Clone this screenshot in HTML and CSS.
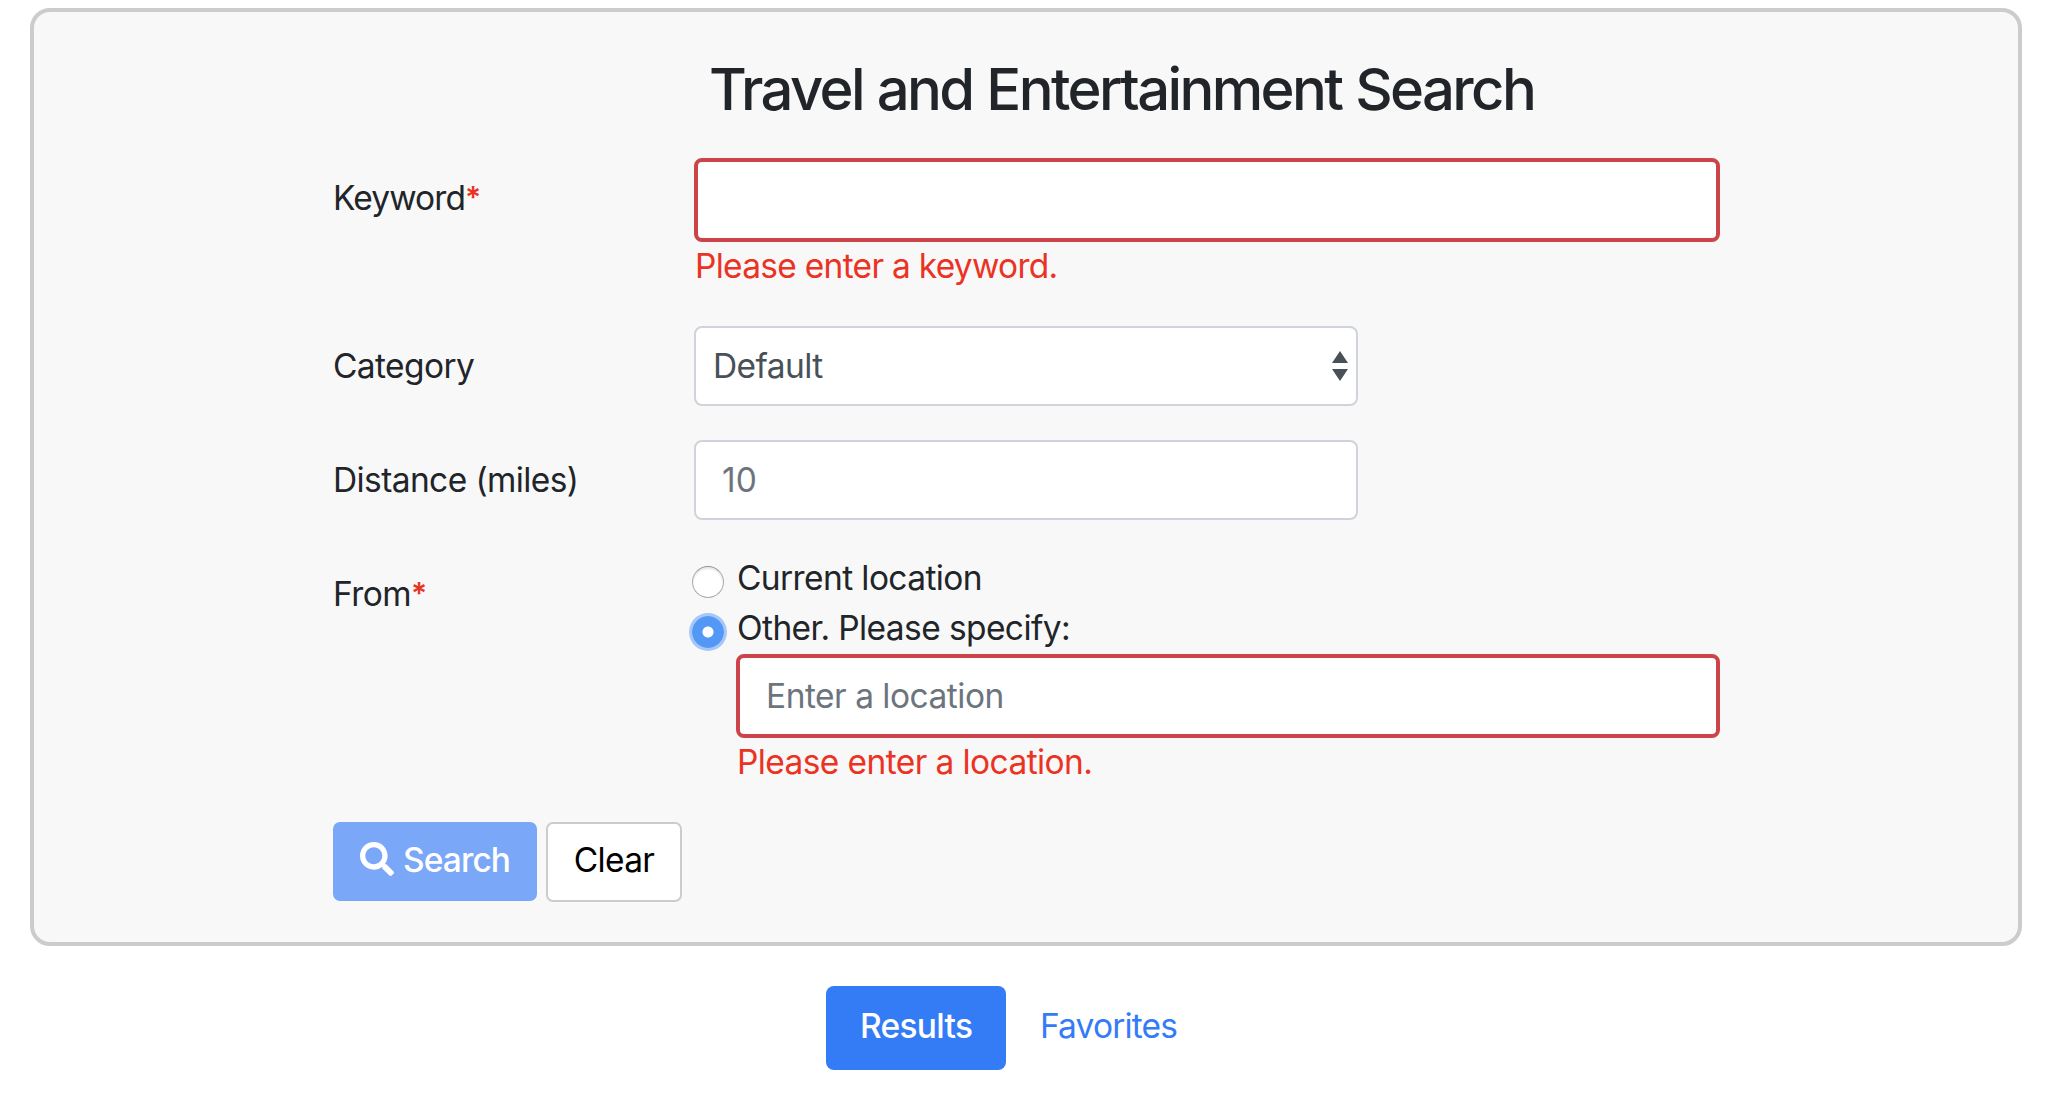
FILE: index.html
```html
<!DOCTYPE html>
<html lang="en">
<head>
<meta charset="utf-8">
<title>Travel and Entertainment Search</title>
<link rel="stylesheet" href="styles.css">
</head>
<body>
<main class="panel">
  <h1 class="title">Travel and Entertainment Search</h1>
  <form class="form">
    <div class="row row-keyword">
      <label class="label">Keyword<span class="star">*</span></label>
      <div class="field">
        <div class="control invalid"></div>
        <div class="error">Please enter a keyword.</div>
      </div>
    </div>
    <div class="row">
      <label class="label">Category</label>
      <div class="control select"><span>Default</span>
        <svg class="arrows" viewBox="0 0 16 30"><path d="M8 0l8 12H0zM8 30l8-12H0z"/></svg>
      </div>
    </div>
    <div class="row">
      <label class="label">Distance (miles)</label>
      <div class="control short">10</div>
    </div>
    <div class="row row-from">
      <label class="label">From<span class="star">*</span></label>
      <div class="field">
        <div class="option"><span class="radio"></span><span>Current location</span></div>
        <div class="option"><span class="radio checked"></span><span>Other. Please specify:</span></div>
        <div class="specify">
          <div class="control invalid">Enter a location</div>
          <div class="error">Please enter a location.</div>
        </div>
      </div>
    </div>
    <div class="actions">
      <div class="btn btn-search"><svg class="icon" viewBox="0 0 512 512"><path d="M505 442.7L405.3 343c-4.500-4.500-10.600-7-17-7H372c27.600-35.300 44-79.700 44-128C416 93.100 322.900 0 208 0S0 93.100 0 208s93.100 208 208 208c48.300 0 92.700-16.400 128-44v16.300c0 6.400 2.500 12.500 7 17l99.700 99.700c9.400 9.400 24.600 9.400 33.900 0l28.300-28.300c9.400-9.400 9.400-24.600.1-34zM208 336c-70.700 0-128-57.200-128-128 0-70.700 57.200-128 128-128 70.700 0 128 57.200 128 128 0 70.700-57.200 128-128 128z"/></svg><span>Search</span></div>
      <div class="btn btn-clear">Clear</div>
    </div>
  </form>
</main>
<nav class="tabs">
  <a class="tab active">Results</a>
  <a class="tab">Favorites</a>
</nav>
</body>
</html>
```
FILE: styles.css
```css
* { box-sizing: border-box; }
body {
  margin: 0;
  padding-top: 8px;
  height: 1098px;
  overflow: hidden;
  background: #fff;
  color: #212529;
  font: 430 33.5px/48px Inter, "Liberation Sans", sans-serif;
  letter-spacing: -0.6px;
}
.panel {
  height: 938px;
  margin: 0 36px 0 30px;
  padding: 41px 298px 0 299px;
  border: 4px solid #ccc;
  border-radius: 20px;
  background: #f8f8f8;
}
.title {
  margin: 0 0 33px;
  padding-left: 376px;
  font-size: 58px;
  font-weight: 540;
  line-height: 72px;
  letter-spacing: -2.63px;
  word-spacing: 1px;
  white-space: nowrap;
}
.row {
  display: grid;
  grid-template-columns: 361px 1fr;
  margin-bottom: 34px;
}
.row-keyword, .row-from { margin-bottom: 36px; }
.row-keyword { letter-spacing: -0.72px; }
.label { padding-top: 16px; white-space: nowrap; }
.row-keyword .label { letter-spacing: -0.9px; }
.star, .error { color: #eb3323; }
.star { font-size: 30px; font-weight: 600; line-height: 1; vertical-align: 2px; }
.control {
  display: flex;
  align-items: center;
  height: 80px;
  padding: 0 26px;
  border: 2px solid #ced4da;
  border-radius: 8px;
  background: #fff;
  color: #6c757d;
}
.invalid { height: 84px; border: 4px solid #cb444a; }
.specify .control { letter-spacing: -0.5px; }
.select, .short { width: 664px; }
.short { letter-spacing: 0; }
.select { justify-content: space-between; padding: 0 8px 0 17px; color: #495057; }
.arrows { width: 16px; height: 30px; fill: #495057; }
.error { padding-left: 1px; }
.option { display: flex; height: 50px; }
.radio {
  width: 32px;
  height: 32px;
  margin: 12px 13px 0 -2px;
  border: 1px solid #adadad;
  border-top-color: #929292;
  border-radius: 50%;
  background: #fff;
  box-shadow: inset 0 2px 2px #e6e6e6;
}
.radio.checked {
  border: 0;
  background: radial-gradient(circle, #fff 5px, #5498f5 6px);
  box-shadow: 0 0 0 3px #a6c8f8;
}
.specify { margin-left: 42px; }
.actions { display: flex; gap: 9px; }
.btn { display: flex; align-items: center; height: 80px; padding-bottom: 4px; border-radius: 7px; }
.btn-search { width: 204px; height: 79px; padding-left: 27px; gap: 9px; background: #7aa7f7; color: #fff; font-weight: 460; letter-spacing: -0.9px; }
.icon { width: 34px; height: 34px; margin-top: -1px; fill: #fff; }
.btn-clear { width: 136px; justify-content: center; border: 2px solid #ccc; background: #fff; color: #000; letter-spacing: -0.72px; }
.tabs { display: flex; margin: 40px 0 0 826px; }
.tab { display: flex; align-items: center; height: 84px; padding: 0 34px 4px; border-radius: 8px; color: #347cf6; letter-spacing: -0.85px; }
.tab.active { width: 180px; background: #347cf6; color: #fff; font-weight: 460; letter-spacing: -0.7px; }
```
